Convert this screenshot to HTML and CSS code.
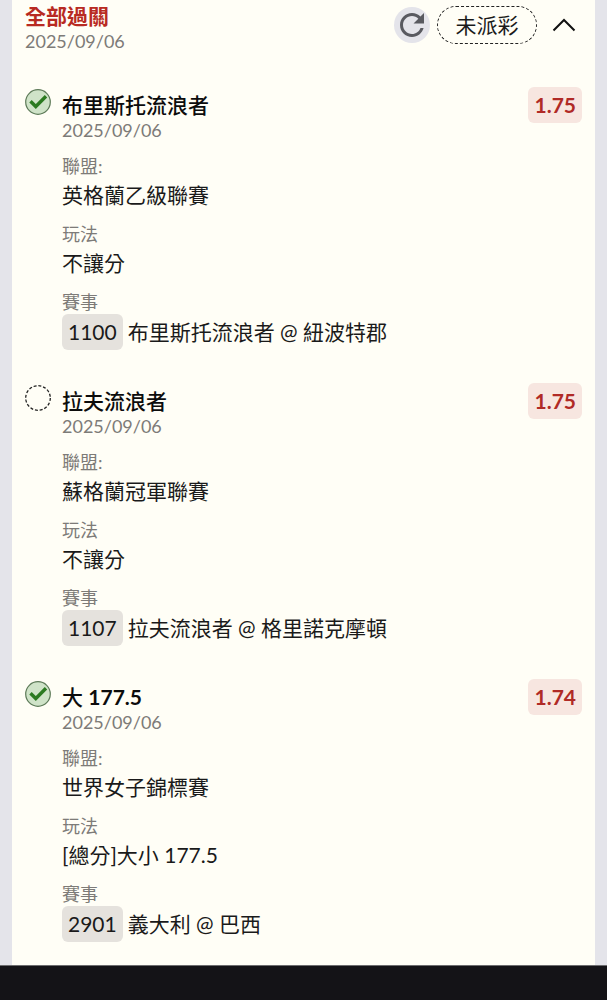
FILE: index.html
```html
<!DOCTYPE html>
<html lang="zh-Hant">
<head>
    <meta charset="UTF-8">
    <meta name="viewport" content="width=device-width, initial-scale=1.0">
    <title>全部過關</title>
    <link rel="stylesheet" href="styles.css">
</head>
<body>
    <main class="ticket">
        <header class="ticket-header">
            <div class="ticket-info">
                <h1>全部過關</h1>
                <p class="date">2025/09/06</p>
            </div>
            <div class="actions">
                <button type="button" class="refresh" aria-label="重新整理">
                    <svg viewBox="0 0 24 24" width="36" height="36">
                        <path d="M17.65 6.35C16.2 4.9 14.21 4 12 4c-4.42 0-7.99 3.58-7.99 8s3.57 8 7.99 8c3.73 0 6.84-2.55 7.73-6h-2.08c-.82 2.33-3.04 4-5.65 4-3.31 0-6-2.69-6-6s2.69-6 6-6c1.66 0 3.14.69 4.22 1.78L13 11h7V4l-2.35 2.35z" fill="#595a60"/>
                    </svg>
                </button>
                <span class="status">未派彩</span>
                <button type="button" class="toggle" aria-label="收合">
                    <svg viewBox="0 0 24 14" width="24" height="14">
                        <path d="M1.5 12.5L12 2L22.5 12.5" fill="none" stroke="#111" stroke-width="2"/>
                    </svg>
                </button>
            </div>
        </header>

        <!-- Leg 1 -->
        <section class="leg">
            <svg class="result" viewBox="0 0 26 26" width="26" height="26">
                <circle cx="13" cy="13" r="12.3" fill="#cfe3c8" stroke="#5d7a58" stroke-width="1.2"/>
                <path d="M5.5 12.2L10.8 17.5L21 7.3" fill="none" stroke="#2b7a20" stroke-width="3.4"/>
            </svg>
            <div class="leg-body">
                <h2>布里斯托流浪者</h2>
                <p class="date">2025/09/06</p>
                <dl>
                    <dt>聯盟:</dt>
                    <dd>英格蘭乙級聯賽</dd>
                    <dt>玩法</dt>
                    <dd>不讓分</dd>
                    <dt>賽事</dt>
                    <dd class="match"><span class="code">1100</span>布里斯托流浪者 @ 紐波特郡</dd>
                </dl>
            </div>
            <span class="odds">1.75</span>
        </section>

        <!-- Leg 2 -->
        <section class="leg">
            <svg class="result" viewBox="0 0 26 26" width="26" height="26">
                <circle cx="13" cy="13" r="12.3" fill="none" stroke="#222" stroke-width="1.3" stroke-dasharray="3 1.83"/>
            </svg>
            <div class="leg-body">
                <h2>拉夫流浪者</h2>
                <p class="date">2025/09/06</p>
                <dl>
                    <dt>聯盟:</dt>
                    <dd>蘇格蘭冠軍聯賽</dd>
                    <dt>玩法</dt>
                    <dd>不讓分</dd>
                    <dt>賽事</dt>
                    <dd class="match"><span class="code">1107</span>拉夫流浪者 @ 格里諾克摩頓</dd>
                </dl>
            </div>
            <span class="odds">1.75</span>
        </section>

        <!-- Leg 3 -->
        <section class="leg">
            <svg class="result" viewBox="0 0 26 26" width="26" height="26">
                <circle cx="13" cy="13" r="12.3" fill="#cfe3c8" stroke="#5d7a58" stroke-width="1.2"/>
                <path d="M5.5 12.2L10.8 17.5L21 7.3" fill="none" stroke="#2b7a20" stroke-width="3.4"/>
            </svg>
            <div class="leg-body">
                <h2>大 <b>177.5</b></h2>
                <p class="date">2025/09/06</p>
                <dl>
                    <dt>聯盟:</dt>
                    <dd>世界女子錦標賽</dd>
                    <dt>玩法</dt>
                    <dd>[總分]大小 177.5</dd>
                    <dt>賽事</dt>
                    <dd class="match"><span class="code">2901</span>義大利 @ 巴西</dd>
                </dl>
            </div>
            <span class="odds">1.74</span>
        </section>
    </main>
    <footer class="bottom-bar"></footer>
</body>
</html>
```

FILE: styles.css
```css
* {
    box-sizing: border-box;
}
body {
    margin: 0;
    min-height: 100vh;
    display: flex;
    flex-direction: column;
    background-color: #e4e4ea;
    font-family: Lato, "Noto Sans CJK TC", sans-serif;
    font-size: 21px;
    color: #1a1a1a;
}
h1, h2, p, dl, dd {
    margin: 0;
}
h1, h2 {
    font-size: 21px;
    line-height: 26px;
}
h1 {
    font-weight: 700;
    color: #b82a22;
}
h2 {
    font-weight: 500;
    color: #0c0c0c;
}
button {
    border: none;
    padding: 0;
    background: none;
    cursor: pointer;
}
svg {
    display: block;
}
.ticket {
    flex: 1;
    margin: 0 12px;
    padding: 3px 13px 22px;
    background-color: #fffef6;
}
.ticket-header {
    display: flex;
    justify-content: space-between;
    align-items: flex-start;
    padding-bottom: 1px;
}
.date {
    font-size: 18px;
    line-height: 24px;
    color: #7d7b78;
}
.actions {
    display: flex;
    align-items: center;
    height: 44px;
}
.refresh {
    width: 36px;
    height: 36px;
    border-radius: 50%;
    background-color: #e4e4ea;
}
.status {
    width: 100px;
    height: 38px;
    margin: 0 15px 0 7px;
    line-height: 36px;
    text-align: center;
    border: 1px dashed #222;
    border-radius: 19px;
}
.toggle {
    margin-right: 6px;
}
.leg {
    display: flex;
    align-items: flex-start;
    margin-top: 38px;
}
.result {
    margin-top: -3px;
}
.leg-body {
    flex: 1;
    margin-left: 11px;
}
.leg dl {
    padding-top: 2px;
}
.leg dt {
    margin-top: 10px;
    font-size: 18px;
    line-height: 24px;
    color: #7d7b78;
}
.leg dd {
    line-height: 34px;
}
.leg .match {
    display: flex;
    align-items: center;
    line-height: 36px;
}
.code {
    margin-right: 5px;
    padding: 0 6px;
    border-radius: 6px;
    background-color: #e5e2dd;
}
.odds {
    margin-top: -5px;
    padding: 0 6px;
    line-height: 36px;
    font-weight: 700;
    border-radius: 6px;
    color: #b02a26;
    background-color: #f7e6e0;
}
.bottom-bar {
    height: 35px;
    border-top: 1px solid #6c6c6e;
    background-color: #141317;
}
```
